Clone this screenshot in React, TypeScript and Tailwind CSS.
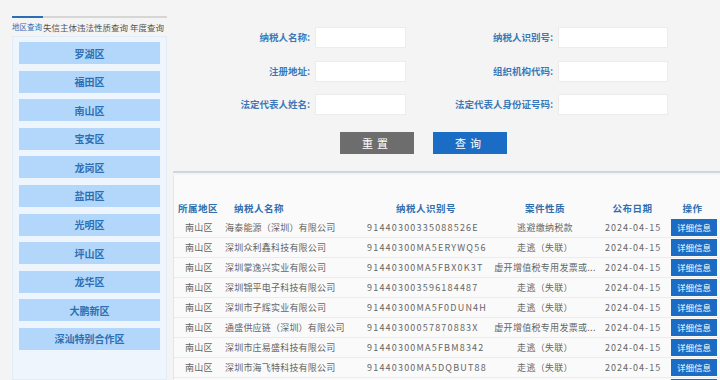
import React from 'react';

const districts = ['罗湖区', '福田区', '南山区', '宝安区', '龙岗区', '盐田区', '光明区', '坪山区', '龙华区', '大鹏新区', '深汕特别合作区'];

const rows: [string, string, string, string][] = [
  ['海泰能源（深圳）有限公司', '91440300335088526E', '逃避缴纳税款', '2024-04-15'],
  ['深圳众利鑫科技有限公司', '91440300MA5ERYWQ56', '走逃（失联）', '2024-04-15'],
  ['深圳掌逸兴实业有限公司', '91440300MA5FBX0K3T', '虚开增值税专用发票或...', '2024-04-15'],
  ['深圳锦平电子科技有限公司', '914403003596184487', '走逃（失联）', '2024-04-15'],
  ['深圳市子辉实业有限公司', '91440300MA5F0DUN4H', '走逃（失联）', '2024-04-15'],
  ['通盛供应链（深圳）有限公司', '91440300057870883X', '虚开增值税专用发票或...', '2024-04-15'],
  ['深圳市庄易盛科技有限公司', '91440300MA5FBM8342', '走逃（失联）', '2024-04-15'],
  ['深圳市海飞特科技有限公司', '91440300MA5DQBUT88', '走逃（失联）', '2024-04-15'],
  ['深圳市四季花科技有限公司', '91440300MA5FBBL29T', '走逃（失联）', '2024-04-15'],
];

const Field: React.FC<{ label: string; labelW: string; inputW: string }> = ({ label, labelW, inputW }) => (
  <div className="flex items-center">
    <div className={`${labelW} text-right pr-[5px] text-[9.5px] font-bold text-[#3b78b8]`}>{label}:</div>
    <div className={`${inputW} h-[21px] bg-white border border-[#ececec]`} />
  </div>
);

const App: React.FC = () => {
  return (
    <div
      className="w-[720px] h-[380px] overflow-hidden bg-[#f4f4f4] flex"
      style={{ fontFamily: '"Noto Sans CJK SC", "Noto Sans", sans-serif' }}
    >
      {/* left side */}
      <div className="ml-[12px] w-[155px] shrink-0 flex flex-col pt-[16px]">
        <div className="flex h-[2px]">
          <div className="w-[31px] bg-[#2c6db5]" />
          <div className="flex-1 bg-[#d6d6d6]" />
        </div>
        <div className="flex items-center h-[18px] whitespace-nowrap leading-none">
          <span className="text-[7.5px] text-[#2c6db5]">地区查询</span>
          <span className="text-[8.5px] text-[#555] ml-[1px]">失信主体违法性质查询</span>
          <span className="text-[8.5px] text-[#555] ml-[2px]">年度查询</span>
        </div>
        <div className="flex-1 bg-[#eef5fc] border border-[#e3ecf5] px-[6px] pt-[5px] flex flex-col gap-[6.6px]">
          {districts.map((d) => (
            <div
              key={d}
              className="h-[22px] bg-[#b2d7fa] flex items-center justify-center text-[10px] font-bold text-[#2d6fb2]"
            >
              {d}
            </div>
          ))}
        </div>
      </div>

      {/* main */}
      <div className="flex-1 ml-[6px] flex flex-col">
        <div className="pt-[27px] flex flex-col gap-[12.5px]">
          <div className="flex">
            <Field label="纳税人名称" labelW="w-[142px]" inputW="w-[91px]" />
            <Field label="纳税人识别号" labelW="w-[152px]" inputW="w-[110px]" />
          </div>
          <div className="flex">
            <Field label="注册地址" labelW="w-[142px]" inputW="w-[91px]" />
            <Field label="组织机构代码" labelW="w-[152px]" inputW="w-[110px]" />
          </div>
          <div className="flex">
            <Field label="法定代表人姓名" labelW="w-[142px]" inputW="w-[91px]" />
            <Field label="法定代表人身份证号码" labelW="w-[152px]" inputW="w-[110px]" />
          </div>
        </div>
        <div className="flex mt-[17px] ml-[167px] gap-[19px]">
          <div className="w-[74px] h-[22px] bg-[#6d6d6d] text-white text-[11px] tracking-[4px] flex items-center justify-center">重置</div>
          <div className="w-[74px] h-[22px] bg-[#1b6cc5] text-white text-[11px] tracking-[4px] flex items-center justify-center">查询</div>
        </div>

        {/* table panel */}
        <div className="mt-[17px] border-t-2 border-[#cbd8e2] flex-1 pt-[2px]">
          <div className="h-full bg-[#fafafa] border-l border-[#e6e6e6] pt-[23px]">
            <table className="w-full border-collapse table-fixed whitespace-nowrap">
              <colgroup>
                <col className="w-[48px]" />
                <col className="w-[140px]" />
                <col className="w-[128px]" />
                <col className="w-[110px]" />
                <col className="w-[65px]" />
                <col className="w-[55px]" />
              </colgroup>
              <thead>
                <tr className="h-[20px] text-[9.5px] font-bold text-[#2f6fb0] tracking-[0.5px]">
                  <th className="text-left pl-[4px] font-bold">所属地区</th>
                  <th className="text-left pl-[12px] font-bold">纳税人名称</th>
                  <th className="text-center font-bold">纳税人识别号</th>
                  <th className="text-center font-bold">案件性质</th>
                  <th className="text-center font-bold">公布日期</th>
                  <th className="text-center font-bold">操作</th>
                </tr>
              </thead>
              <tbody>
                {rows.map((r, i) => (
                  <tr key={i} className="h-[18px] border-b border-[#ececec] text-[9px] text-[#666] leading-none">
                    <td className="pl-[11px] tracking-[0.3px]">南山区</td>
                    <td className="pl-[3px] tracking-[0.2px]">{r[0]}</td>
                    <td className="pl-[5px] tracking-[1.2px]">{r[1]}</td>
                    <td className="text-center tracking-[0.3px] overflow-hidden">{r[2]}</td>
                    <td className="pl-[5px] tracking-[1px]">{r[3]}</td>
                    <td className="pl-[6px] py-[1px]">
                      <div className="w-[46px] h-[17px] bg-[#1b6cc5] text-white text-[8.5px] flex items-center justify-center">详细信息</div>
                    </td>
                  </tr>
                ))}
              </tbody>
            </table>
          </div>
        </div>
      </div>
    </div>
  );
};

export default App;
